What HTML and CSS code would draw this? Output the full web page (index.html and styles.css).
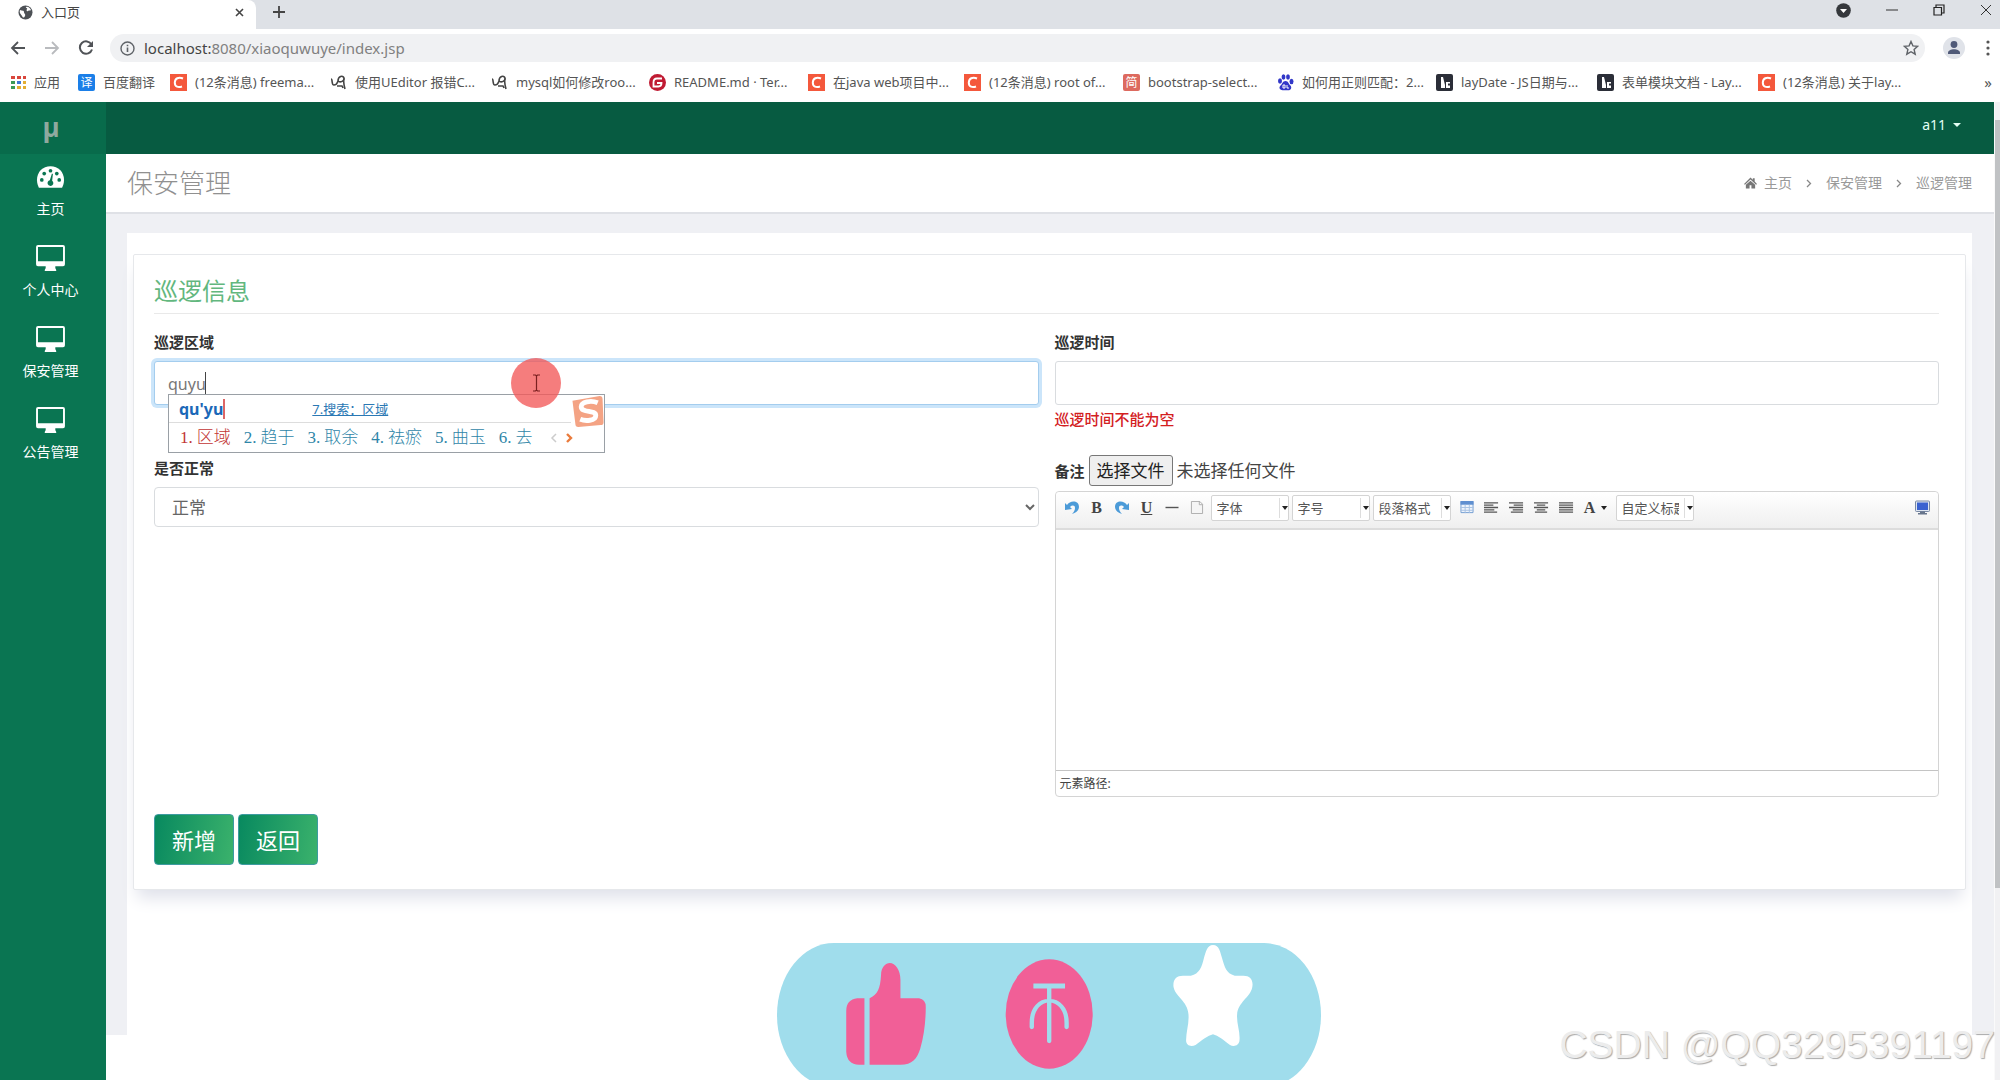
FILE: index.html
```html
<!DOCTYPE html>
<html lang="zh-CN">
<head>
<meta charset="utf-8">
<title>入口页</title>
<link rel="stylesheet" href="styles.css">
</head>
<body>
<svg class="sprite" aria-hidden="true">
  <symbol id="i-desktop" viewBox="0 0 30 27"><path fill="currentColor" fill-rule="evenodd" d="M2 0h26a2 2 0 0 1 2 2v18a2 2 0 0 1-2 2h-8v2c0 1 1 1 1 3H9c0-2 1-2 1-3v-2H2a2 2 0 0 1-2-2V2a2 2 0 0 1 2-2zm0 2v15h26V2z"/></symbol>
  <symbol id="i-csdn" viewBox="0 0 17 17"><path fill="#f4583c" d="M0 0h17v17H0z"/><path fill="none" stroke="#fff" stroke-width="2" d="M13 4.500C8.500 2.500 5 4.500 4.800 8.500c0 4.500 3.500 5.300 7.200 4"/></symbol>
  <symbol id="i-cat" viewBox="0 0 17 17"><path fill="none" stroke="#444" stroke-width="1.600" d="M1 5c2 0 0 6 3 6 3 0 3-2 4-4 0-5 5-6 6-3s-4 5-6 3M14 4c-1 4 0 7 1 11M7 12h5l1 2"/></symbol>
  <symbol id="i-lay" viewBox="0 0 17 17"><rect width="17" height="17" rx="2" fill="#2b2e38"/><path fill="#fff" d="M5 3h2l2 8v3H5z"/><path fill="#fff" d="M10 8h4v1.500h-2v2h2V14h-4z"/></symbol>
  <symbol id="i-left" viewBox="0 0 16 12"><path stroke="#555" stroke-width="1.400" d="M0 1h15M0 3.500h10M0 6h15M0 8.500h11M0 11h14"/></symbol>
  <symbol id="i-right" viewBox="0 0 16 12"><path stroke="#555" stroke-width="1.400" d="M0 1h15M5 3.500h10M0 6h15M4 8.500h11M2 11h13"/></symbol>
  <symbol id="i-center" viewBox="0 0 16 12"><path stroke="#555" stroke-width="1.400" d="M0 1h15M3 3.500h9M0 6h15M3 8.500h9M1 11h13"/></symbol>
  <symbol id="i-just" viewBox="0 0 16 12"><path stroke="#555" stroke-width="1.400" d="M0 1h15M0 3.500h15M0 6h15M0 8.500h15M0 11h15"/></symbol>
  <symbol id="i-undo" viewBox="0 0 14 13"><path fill="#4c9bd8" d="M0 2l2 2C5-1 14-1 14 6c0 3-3 6-7 7 2-2 3-4 3-6 0-3-3-3-5-1l2 2-7 1z"/></symbol>
</svg>

<header class="browser">
  <div class="tabstrip">
    <div class="tab">
      <svg class="ic15" viewBox="0 0 15 15"><circle cx="7.500" cy="7.500" r="7" fill="#4d5156"/><path fill="#fff" d="M2 5c2 1 4 0 4 2s2 2 1 4-2 2-3 0S1 8 2 5zM8 2c2-1 4 1 5 3-1 1-2 0-3 1s-2-1-1-2-2-1-1-2z"/></svg>
      <span class="tab-title">入口页</span>
      <svg class="ic9" viewBox="0 0 9 9"><path d="M1 1l7 7M8 1L1 8" stroke="#444" stroke-width="1.600"/></svg>
    </div>
    <button class="plain" aria-label="新标签页"><svg class="ic12" viewBox="0 0 12 12"><path d="M6 0v12M0 6h12" stroke="#444" stroke-width="1.800"/></svg></button>
    <div class="winctl">
      <svg class="ic15" viewBox="0 0 15 15"><circle cx="7.500" cy="7.500" r="7.300" fill="#35383c"/><path fill="#fff" d="M4 6h7l-3.500 4z"/></svg>
      <svg class="ic12" viewBox="0 0 12 12"><path d="M0 6h12" stroke="#333"/></svg>
      <svg class="ic12" viewBox="0 0 12 12"><path d="M1 3.500h7.500V11H1zM3 3V1h8v8H9" fill="none" stroke="#222" stroke-width="1.200"/></svg>
      <svg class="ic12" viewBox="0 0 12 12"><path d="M1 1l10 10M11 1L1 11" stroke="#333"/></svg>
    </div>
  </div>
  <div class="toolbar">
    <button class="plain" aria-label="后退"><svg class="ic16" viewBox="0 0 16 16"><path d="M15 8H2M8 2L2 8l6 6" fill="none" stroke="#505357" stroke-width="1.800"/></svg></button>
    <button class="plain" aria-label="前进"><svg class="ic16" viewBox="0 0 16 16"><path d="M1 8h13M8 2l6 6-6 6" fill="none" stroke="#b9bbbe" stroke-width="1.800"/></svg></button>
    <button class="plain" aria-label="刷新"><svg class="ic16" viewBox="0 0 16 16"><path d="M13.500 4.500A6.200 6.200 0 1 0 14 9.500" fill="none" stroke="#505357" stroke-width="2"/><path fill="#505357" d="M15 1v6H9z"/></svg></button>
    <div class="omnibox">
      <svg class="ic15" viewBox="0 0 15 15"><circle cx="7.500" cy="7.500" r="6.500" fill="none" stroke="#5f6368" stroke-width="1.400"/><path d="M7.500 6.500V11M7.500 3.800v1.500" stroke="#5f6368" stroke-width="1.600"/></svg>
      <span class="url">localhost:<span class="url-dim">8080/xiaoquwuye/index.jsp</span></span>
      <svg class="ic16" viewBox="0 0 16 16"><path d="M8 1.500l1.900 4.400 4.800.4-3.600 3.200 1.100 4.700L8 11.700l-4.200 2.500 1.100-4.700L1.300 6.300l4.800-.4z" fill="none" stroke="#5f6368" stroke-width="1.400"/></svg>
    </div>
    <svg class="avatar" viewBox="0 0 22 22"><circle cx="11" cy="11" r="11" fill="#e0e3e9"/><circle cx="11" cy="7.500" r="3.400" fill="#505a78"/><path fill="#505a78" d="M5 16c0-5 12-5 12 0v1H5z"/></svg>
    <svg class="dots" viewBox="0 0 4 16"><g fill="#555"><circle cx="2" cy="2" r="1.600"/><circle cx="2" cy="8" r="1.600"/><circle cx="2" cy="14" r="1.600"/></g></svg>
  </div>
  <nav class="bookmarks">
    <a href="#"><svg class="ic15" viewBox="0 0 15 15"><g><path fill="#d9463c" d="M0 1h4v3H0zM6 1h4v3H6zM12 1h3v3h-3z"/><path fill="#3d9a57" d="M0 6h4v3H0z"/><path fill="#3f78d8" d="M6 6h4v3H6z"/><path fill="#e3ae32" d="M12 6h3v3h-3zM6 11h4v3H6zM12 11h3v3h-3z"/><path fill="#3d9a57" d="M0 11h4v3H0z"/></g></svg>应用</a>
    <a href="#"><span class="fav fav-blue">译</span>百度翻译</a>
    <a href="#"><svg class="ic17"><use href="#i-csdn"/></svg>(12条消息) freema...</a>
    <a href="#"><svg class="ic17"><use href="#i-cat"/></svg>使用UEditor 报错C...</a>
    <a href="#"><svg class="ic17"><use href="#i-cat"/></svg>mysql如何修改roo...</a>
    <a href="#"><svg class="ic17" viewBox="0 0 17 17"><circle cx="8.500" cy="8.500" r="8.500" fill="#c01b33"/><path d="M13 4.500H8c-2.500 0-3.500 1.500-3.500 4v4h5c2 0 3-1 3-3.500H8" fill="none" stroke="#fff" stroke-width="1.800"/></svg>README.md · Ter...</a>
    <a href="#"><svg class="ic17"><use href="#i-csdn"/></svg>在java web项目中...</a>
    <a href="#"><svg class="ic17"><use href="#i-csdn"/></svg>(12条消息) root of...</a>
    <a href="#"><span class="fav fav-red">简</span>bootstrap-select...</a>
    <a href="#"><svg class="ic17" viewBox="0 0 17 17"><g fill="#3238c8"><ellipse cx="3" cy="7" rx="2" ry="2.700"/><ellipse cx="6.500" cy="3" rx="1.900" ry="2.700"/><ellipse cx="11" cy="3" rx="1.900" ry="2.700"/><ellipse cx="14.500" cy="7.500" rx="2" ry="2.700"/><path d="M8.500 7c3 0 3 3 5 4.500 2 3-.5 5-2.500 4.700H6C3.500 16.500 1 14 3.500 11.500 5.500 10 5.500 7 8.500 7z"/></g><path d="M6 11v3h2v-3zM10 11v3h2" fill="none" stroke="#fff"/></svg>如何用正则匹配：2...</a>
    <a href="#"><svg class="ic17"><use href="#i-lay"/></svg>layDate - JS日期与...</a>
    <a href="#"><svg class="ic17"><use href="#i-lay"/></svg>表单模块文档 - Lay...</a>
    <a href="#"><svg class="ic17"><use href="#i-csdn"/></svg>(12条消息) 关于lay...</a>
    <span class="more">»</span>
  </nav>
</header>

<div class="app">
  <aside class="sidebar">
    <div class="logo">μ</div>
    <nav class="menu">
      <a href="#"><svg class="menu-ic" viewBox="0 0 30 26"><path fill="currentColor" d="M15 2C7 2 1 8 1 16c0 3 1 6 2 8h24c1-2 2-5 2-8C29 8 23 2 15 2z"/><g fill="#0a7552"><circle cx="6" cy="16" r="1.900"/><circle cx="8.500" cy="9.500" r="1.900"/><circle cx="15" cy="6.500" r="1.900"/><circle cx="21.500" cy="9.500" r="1.900"/><circle cx="24" cy="16" r="1.900"/><path d="M16.500 9.500l1 .3-.8 7a3 3 0 1 1-2.400-.5z"/></g></svg>主页</a>
      <a href="#"><svg class="menu-ic"><use href="#i-desktop"/></svg>个人中心</a>
      <a href="#"><svg class="menu-ic"><use href="#i-desktop"/></svg>保安管理</a>
      <a href="#"><svg class="menu-ic"><use href="#i-desktop"/></svg>公告管理</a>
    </nav>
  </aside>

  <div class="main">
    <div class="topbar"><button class="user">a11<span class="caret"></span></button></div>
    <div class="pagehead">
      <h1>保安管理</h1>
      <nav class="crumbs">
        <a href="#"><svg class="home" viewBox="0 0 14 12"><path fill="#777" d="M7 0l2.500 2.500V1h2v3.500L14 7l-1 .8L7 2.300 1 7.800 0 7zM7 3.500l5 4.500v4H8V8.500H6V12H2V8z"/></svg>主页</a>
        <svg class="sep" viewBox="0 0 6 9"><path d="M1 1l3.500 3.500L1 8" fill="none" stroke="#888" stroke-width="1.300"/></svg>
        <a href="#">保安管理</a>
        <svg class="sep" viewBox="0 0 6 9"><path d="M1 1l3.500 3.500L1 8" fill="none" stroke="#888" stroke-width="1.300"/></svg>
        <span>巡逻管理</span>
      </nav>
    </div>

    <main class="content">
      <div class="panel">
        <form class="card">
          <h2>巡逻信息</h2>
          <div class="columns">
            <div class="col">
              <label class="lbl" for="area">巡逻区域</label>
              <div class="field">
                <input class="text focused" id="area" type="text" value="quyu">
                <span class="text-caret"></span>
                <div class="ime">
                  <div class="ime-top"><b class="pinyin">qu'yu</b><a href="#">7.搜索：区域</a></div>
                  <div class="ime-list">
                    <span class="picked">1.<i>区域</i></span><span>2.<i>趋于</i></span><span>3.<i>取余</i></span><span>4.<i>祛瘀</i></span><span>5.<i>曲玉</i></span><span>6.<i>去</i></span>
                    <svg class="ime-nav" viewBox="0 0 24 12"><path d="M6 2L2 6l4 4" fill="none" stroke="#ccc" stroke-width="1.500"/><path d="M17 2l4 4-4 4" fill="none" stroke="#ea7b3c" stroke-width="2.400"/></svg>
                  </div>
                  <svg class="sogou" viewBox="0 0 34 34"><path fill="#f4a384" d="M1 6L29 1q3 0 3 3l1 24q0 3-3 3L7 33q-3 0-3-3z"/><path d="M27 8C20 5 10 7 10 12c0 7 15 3 15 9 0 6-11 6-16 4" fill="none" stroke="#fff" stroke-width="5"/></svg>
                </div>
                <span class="pointer"><svg viewBox="0 0 9 18"><path d="M1 1h2.500l1 1 1-1H8M4.500 2v14M1 17h2.500l1-1 1 1H8" fill="none" stroke="#7a2020" stroke-width="1.200"/></svg></span>
              </div>
              <label class="lbl lbl-second" for="normal">是否正常</label>
              <select class="pick" id="normal"><option>正常</option></select>
            </div>

            <div class="col">
              <label class="lbl" for="time">巡逻时间</label>
              <input class="text" id="time" type="text">
              <p class="error">巡逻时间不能为空</p>
              <div class="filerow">
                <span class="lbl">备注</span>
                <input class="hidden-file" id="file" type="file">
                <label class="filebtn" for="file">选择文件</label>
                <span class="filename">未选择任何文件</span>
              </div>
              <div class="editor">
                <div class="edbar">
                  <button type="button" aria-label="撤销"><svg class="ic14"><use href="#i-undo"/></svg></button>
                  <button type="button" class="glyph">B</button>
                  <button type="button" aria-label="重做"><svg class="ic14 flip"><use href="#i-undo"/></svg></button>
                  <button type="button" class="glyph under">U</button>
                  <button type="button" aria-label="分隔线"><svg class="ic14" viewBox="0 0 14 14"><path d="M0 7h14" stroke="#555" stroke-width="1.500"/></svg></button>
                  <button type="button" aria-label="新建"><svg class="ic14" viewBox="0 0 14 14"><path d="M1 .5h9l3 3v10H1zM9.500.5v3.500H13" fill="#f5f5f5" stroke="#aaa"/></svg></button>
                  <span class="combo"><select aria-label="字体"><option>字体</option></select></span>
                  <span class="combo"><select aria-label="字号"><option>字号</option></select></span>
                  <span class="combo"><select aria-label="段落格式"><option>段落格式</option></select></span>
                  <span class="aligns">
                    <button type="button" aria-label="表格"><svg class="ic14" viewBox="0 0 14 14"><path fill="#eef4fc" stroke="#6f9bd0" d="M.5.5h13v12H.5z"/><path fill="#5f8fd0" d="M0 0h14v4H0z"/><path d="M5 4v9M9.500 4v9M0 7h14M0 10h14" stroke="#a5c0e2"/></svg></button>
                    <button type="button" aria-label="左对齐"><svg class="ic15"><use href="#i-left"/></svg></button>
                    <button type="button" aria-label="右对齐"><svg class="ic15"><use href="#i-right"/></svg></button>
                    <button type="button" aria-label="居中"><svg class="ic15"><use href="#i-center"/></svg></button>
                    <button type="button" aria-label="两端对齐"><svg class="ic15"><use href="#i-just"/></svg></button>
                    <button type="button" class="glyph color">A<span class="caret"></span></button>
                  </span>
                  <span class="combo"><select aria-label="自定义标题"><option>自定义标题</option></select></span>
                  <button type="button" class="full" aria-label="全屏"><svg class="ic15" viewBox="0 0 15 14"><rect x=".5" y=".5" width="14" height="10.500" rx="1" fill="#dfe6f0" stroke="#7889a5"/><path fill="#3a62d0" d="M2 2h11v7.500H2z"/><path fill="#67758c" d="M5 11h5v1.500h2V14H3v-1.500h2z"/></svg></button>
                </div>
                <div class="edbody" contenteditable="true"></div>
                <div class="edfoot">元素路径:</div>
              </div>
            </div>
          </div>
          <div class="actions"><button type="button">新增</button><button type="button">返回</button></div>
        </form>
      </div>
    </main>
  </div>
  <div class="scroll"><div class="thumb"></div></div>
</div>

<div class="reactions">
  <svg viewBox="95 69 1375 432" preserveAspectRatio="none">
    <g fill="#f15f97">
      <path d="M316 235h-18q-28 4-28 38v122q2 38 32 39h14zM329 434V235c20-12 27-28 29-70 0-24 12-36 22-36 14 0 27 22 27 50v56h47q17 3 17 26c0 40-4 85-14 125-8 30-20 48-50 48z"/>
      <ellipse cx="783" cy="282" rx="110" ry="164"/>
    </g>
    <g fill="none" stroke="#a0ddec" stroke-linecap="round">
      <path stroke-width="15" stroke-linecap="butt" d="M743 198h80"/><path stroke-width="11" d="M783 200v164M739 322v-14c0-88 88-88 88 0v14"/>
    </g>
    <path fill="#fff" d="M1197 75c16 0 18 20 23 40 6 24 10 46 32 52h22c18 0 26 14 22 36-5 28-36 44-38 80-2 28 8 50 6 78-1 18-16 20-24 14-16-14-30-28-43-32-13 4-28 18-44 32-10 6-24 4-24-14 0-28 8-50 6-78-2-40-35-54-38-84-1-22 8-32 24-32h20c22-4 28-28 33-52 5-20 8-40 23-40z"/>
  </svg>
</div>
<div class="watermark">CSDN @QQ3295391197</div>
</body>
</html>
```

FILE: styles.css
```css
* { box-sizing: border-box; }
body {
  margin: 0;
  height: 100vh;
  overflow: hidden;
  display: flex;
  flex-direction: column;
  position: relative;
  background: #fff;
  color: #555;
  font: 14px/22px "Noto Sans", "Noto Sans CJK SC", sans-serif;
}
a { color: inherit; text-decoration: none; }
button { font: inherit; border: 0; background: none; padding: 0; cursor: pointer; }
svg { display: block; flex: none; }
.sprite { position: absolute; width: 0; height: 0; }
.ic9 { width: 9px; height: 9px; }
.ic12 { width: 12px; height: 12px; }
.ic14 { width: 14px; height: 13px; }
.ic15 { width: 15px; height: 15px; }
.ic16 { width: 16px; height: 16px; }
.ic17 { width: 17px; height: 17px; }
.flip { transform: scaleX(-1); }

/* browser frame */
.browser { flex: none; color: #444; }
.tabstrip { height: 29px; display: flex; align-items: center; background: #dee1e6; padding-bottom: 5px; }
.tab {
  width: 256px; height: 29px; margin-bottom: -5px; padding: 0 12px 5px 18px;
  display: flex; align-items: center; gap: 8px; background: #fff; border-radius: 0 8px 0 0;
}
.tab-title { flex: 1; font-size: 13px; }
.tabstrip > .plain { margin-left: 17px; }
.winctl { margin-left: auto; display: flex; align-items: center; gap: 35px; padding: 0 8px 4px 0; }
.toolbar { height: 38px; display: flex; align-items: center; gap: 18px; padding: 0 10px; }
.omnibox {
  flex: 1; height: 28px; margin: 0 6px 0 -2px; padding: 0 6px 0 10px; border-radius: 14px;
  background: #f0f1f3; display: flex; align-items: center; gap: 9px;
}
.url { flex: 1; font-size: 15px; color: #444; }
.url-dim { color: #808080; }
.avatar { width: 22px; height: 22px; }
.dots { width: 4px; height: 16px; }
.toolbar .avatar { margin-left: -6px; }
.toolbar .dots { margin-left: 3px; }
.bookmarks {
  height: 35px; padding: 0 8px 5px 11px; display: grid; align-items: center;
  grid-template-columns: 67px 92px 160px 161px 158px 159px 156px 159px 154px 159px 161px 161px 1fr auto;
  font-size: 13px; line-height: 20px; white-space: nowrap; color: #555;
}
.bookmarks a { display: flex; align-items: center; gap: 8px; }
.fav { width: 17px; height: 17px; font-size: 12px; line-height: 17px; border-radius: 2px; color: #fff; text-align: center; }
.fav-blue { background: #1b7fe8; }
.fav-red { background: #dd6a5f; }
.more { font-size: 15px; }

/* application shell */
.app { flex: 1; min-height: 0; display: flex; }
.sidebar { width: 106px; flex: none; background: #0a7552; color: #fff; }
.logo {
  height: 52px; background: #086b4b; color: #8fa99f; text-align: center;
  padding-right: 4px; font: bold 26px/50px "Open Sans", sans-serif;
}
.menu a {
  display: flex; flex-direction: column; align-items: center; gap: 8px;
  height: 81px; padding: 10px 5px 0 0;
}
.menu-ic { width: 29px; height: 26px; }
.main { flex: 1; min-width: 0; }
.topbar { height: 52px; background: #075b41; display: flex; justify-content: flex-end; align-items: center; padding: 0 33px 6px 0; }
.user { color: #e4fff4; display: flex; align-items: center; gap: 7px; }
.caret { border: 4px solid transparent; border-top-color: currentColor; border-bottom: 0; }
.pagehead {
  height: 60px; display: flex; justify-content: space-between; align-items: center;
  padding: 0 22px 0 21px; border-bottom: 2px solid #dfe1e6; color: #999;
}
h1 { margin: 0; font-size: 26px; font-weight: 300; color: #909090; }
.crumbs { display: flex; align-items: center; gap: 14px; }
.crumbs a { display: flex; align-items: center; gap: 7px; }
.home { width: 13px; height: 12px; }
.sep { width: 6px; height: 9px; }
.content { background: #eff0f4; padding: 19px 22px 0 21px; }
.panel { background: #fff; min-height: 802px; padding: 21px 6px 0; }
.scroll { width: 6px; flex: none; background: #f1f1f3; border-left: 1px solid #fafafa; padding-top: 18px; }
.thumb { height: 80%; background: #c0c2c4; }

/* patrol form */
.card {
  background: #fff; border: 1px solid #e6e8eb; border-radius: 2px; padding: 19px 26px 24px 20px;
  box-shadow: 0 12px 16px -4px #dfe1ea;
}
h2 { margin: 0; height: 40px; border-bottom: 1px solid #e9e9e9; color: #62b77e; font-size: 24px; line-height: 34px; font-weight: 400; }
.columns { display: grid; grid-template-columns: 1fr 1fr; gap: 16px; padding-top: 17px; }
.lbl { display: block; font-size: 15px; font-weight: 700; color: #333; }
.text {
  display: block; width: 100%; height: 44px; margin-top: 8px; padding: 2px 13px 0;
  border: 1px solid #d9dcdf; border-radius: 3px; background: #fff; outline: 0;
  font: inherit; font-size: 16px; color: #777;
}
.focused { border-color: #a4cdee; box-shadow: 0 0 0 3px #cbe5fa; }
.field { position: relative; }
.text-caret { position: absolute; left: 51px; top: 11px; width: 1px; height: 22px; background: #444; }
.ime {
  position: absolute; left: 14px; top: 33px; width: 437px; height: 59px;
  border: 1px solid #9aa0a6; background: #fff; white-space: nowrap;
}
.ime-top { display: flex; align-items: center; height: 28px; margin-right: 33px; padding-left: 10px; border-bottom: 1px solid #ddd; }
.ime-top a { margin-left: 87px; color: #2a78b4; font-size: 13px; text-decoration: underline; }
.pinyin { color: #1b68b8; font-size: 16px; border-right: 2px solid #d66; line-height: 20px; }
.ime-list { display: flex; align-items: center; gap: 13px; height: 29px; padding-left: 11px; color: #2f86a8; font: 17px/24px "Liberation Serif", "Noto Sans CJK SC", serif; }
.ime-list i { font-style: normal; font-weight: 300; margin-left: 4px; }
.ime-list .picked { color: #c23434; }
.ime-nav { width: 24px; height: 12px; margin-left: 4px; }
.sogou { position: absolute; right: -1px; top: 0; width: 34px; height: 33px; }
.pointer {
  position: absolute; left: 357px; top: -3px; width: 50px; height: 50px; border-radius: 50%;
  background: rgba(242, 88, 88, .78); display: grid; place-items: center;
}
.pointer svg { width: 9px; height: 18px; }
.lbl-second { margin-top: 52px; }
.pick {
  width: 100%; height: 40px; margin-top: 8px; padding: 0 0 0 13px; border: 1px solid #d9dcdf;
  border-radius: 4px; background: #fff; color: #666; font: inherit; font-size: 17px;
}
.error { margin: 3px 0 25px; color: #d3201f; font-size: 15px; font-weight: 500; }
.filerow { display: flex; align-items: center; gap: 4px; height: 31px; margin-bottom: 5px; position: relative; }
.hidden-file { position: absolute; width: 1px; height: 1px; opacity: 0; }
.filebtn { height: 31px; padding: 0 7px; border: 1px solid #777; border-radius: 3px; background: #efefef; color: #222; font-size: 17px; line-height: 29px; }
.filename { font-size: 17px; color: #444; }
.editor { border: 1px solid #d4d4d4; border-radius: 4px; }
.edbar {
  height: 38px; display: flex; align-items: center; padding: 0 5px 5px; gap: 3px;
  background: linear-gradient(#fff, #efefef); border-bottom: 2px solid #dcdcdc; border-radius: 4px 4px 0 0;
}
.edbar button { width: 22px; height: 22px; flex: none; display: flex; align-items: center; justify-content: center; color: #444; }
.edbar .glyph { font: bold 16px "Liberation Serif", serif; }
.edbar .under { text-decoration: underline; }
.edbar .color { width: 30px; gap: 6px; }
.aligns { display: flex; gap: 3px; padding: 0 2px; }
.color .caret, .combo::after { border: 3px solid transparent; border-top: 4px solid #222; border-bottom: 0; }
.edbar .full { margin-left: auto; }
.combo { position: relative; width: 78px; height: 26px; flex: none; }
.combo::after { content: ""; position: absolute; right: 1px; top: 11px; }
.combo select {
  appearance: none; width: 100%; height: 100%; padding: 0 14px 0 5px; border: 1px solid #d4d4d4;
  background: linear-gradient(#ddd, #ddd) right 8px center / 1px 20px no-repeat #fff;
  color: #555; font: inherit; font-size: 13px; border-radius: 2px;
}
.edbody { height: 240px; outline: 0; }
.edfoot { height: 26px; border-top: 1px solid #c4c4c4; padding-left: 4px; font-size: 12px; line-height: 26px; color: #444; }
.actions { display: flex; gap: 4px; margin-top: 17px; }
.actions button {
  width: 80px; height: 51px; border: 1px solid #3d9ba0; border-radius: 4px; color: #fff;
  font-size: 22px; background: linear-gradient(100deg, #08895f, #3bb26c);
}

/* floating overlays */
.reactions {
  position: absolute; left: 777px; top: 943px; width: 544px; height: 144px;
  background: #a0ddec; border-radius: 57px / 72px;
}
.reactions svg { width: 100%; height: 100%; }
.watermark {
  position: absolute; right: 5px; top: 1023px; white-space: nowrap;
  font: 39px/44px "Liberation Sans", Arial, sans-serif; color: #ececec; text-shadow: 1px 1px 1px #aaa;
}
```
